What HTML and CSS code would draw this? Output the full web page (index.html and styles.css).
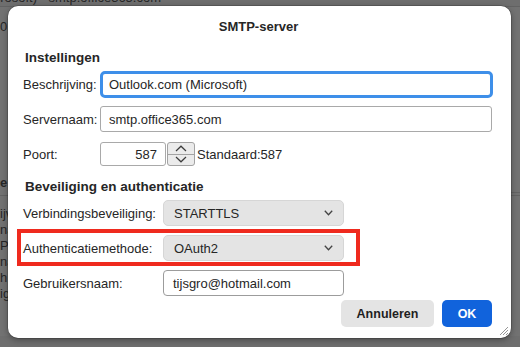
FILE: index.html
```html
<!DOCTYPE html>
<html lang="nl">
<head>
  <meta charset="UTF-8" />
  <title>SMTP-server</title>
  <link rel="stylesheet" href="styles.css">
</head>
<body>
  <!-- window behind the sheet -->
  <div class="behind">
    <div class="behind-title">Outlook.com (Microsoft) - smtp.office365.com</div>
    <div class="behind-list">
      <div class="b-line b-first">0.(</div>
      <div class="b-gap"></div>
      <div class="b-line b-bold">e</div>
      <div class="b-rule"></div>
      <div class="b-line">ijv</div>
      <div class="b-line">na</div>
      <div class="b-line">Po</div>
      <div class="b-line">na</div>
      <div class="b-line">h</div>
      <div class="b-line">ig</div>
    </div>
  </div>
  <div class="behind-right"></div>

  <div class="dialog">
    <div class="title">SMTP-server</div>

    <div class="heading">Instellingen</div>
    <div class="row row-desc">
      <label class="lbl lbl-short">Beschrijving:</label>
      <div class="field focused">Outlook.com (Microsoft)</div>
    </div>
    <div class="row row-server">
      <label class="lbl lbl-short">Servernaam:</label>
      <div class="field">smtp.office365.com</div>
    </div>
    <div class="row row-port">
      <label class="lbl lbl-short">Poort:</label>
      <div class="field number">587</div>
      <div class="stepper">
        <span class="step step-up">
          <svg width="12" height="7" viewBox="0 0 12 7"><path d="M1 6 L6 1.2 L11 6" fill="none" stroke="#3c3c3c" stroke-width="1.2"/></svg>
        </span>
        <span class="step">
          <svg width="12" height="7" viewBox="0 0 12 7"><path d="M1 1 L6 5.8 L11 1" fill="none" stroke="#3c3c3c" stroke-width="1.2"/></svg>
        </span>
      </div>
      <span class="default">Standaard:587</span>
    </div>

    <div class="heading heading-sec">Beveiliging en authenticatie</div>
    <div class="row row-sec">
      <label class="lbl lbl-long">Verbindingsbeveiliging:</label>
      <div class="select">
        <span>STARTTLS</span>
        <svg width="9" height="6" viewBox="0 0 9 6"><path d="M0.8 0.8 L4.5 4.8 L8.2 0.8" fill="none" stroke="#444" stroke-width="1.3"/></svg>
      </div>
    </div>
    <div class="row highlight">
      <label class="lbl lbl-long">Authenticatiemethode:</label>
      <div class="select">
        <span>OAuth2</span>
        <svg width="9" height="6" viewBox="0 0 9 6"><path d="M0.8 0.8 L4.5 4.8 L8.2 0.8" fill="none" stroke="#444" stroke-width="1.3"/></svg>
      </div>
    </div>
    <div class="row row-user">
      <label class="lbl lbl-long">Gebruikersnaam:</label>
      <div class="field user">tijsgro@hotmail.com</div>
    </div>

    <div class="actions">
      <button class="btn">Annuleren</button>
      <button class="btn btn-ok">OK</button>
    </div>

    <svg class="grip" width="12" height="12" viewBox="0 0 12 12">
      <path d="M11 3 L3 11 M11 6 L6 11 M11 9 L9 11" stroke="#8a8a8a" stroke-width="0.9"/>
    </svg>
  </div>
</body>
</html>
```

FILE: styles.css
```css
html, body {
  margin: 0;
  height: 100%;
}
body {
  position: relative;
  overflow: hidden;
  background: #6e6e6e;
  font-family: "Liberation Sans", Arial, sans-serif;
  font-size: 13px;
  color: #262626;
  padding: 6px 0 0 8px;
  box-sizing: border-box;
}

/* ---- window behind ---- */
.behind {
  position: absolute;
  top: -10px;
  left: 0;
  right: 0;
  bottom: 0;
  overflow: hidden;
  color: #262626;
}
.behind-title {
  font-size: 13px;
  line-height: 16px;
  height: 16px;
  white-space: nowrap;
  margin-left: -101px;
}
.behind-list {
  border-top: 1px solid #626262;
  background: #727272;
  padding-top: 12px;
  height: 330px;
  box-sizing: border-box;
}
.b-line {
  font-size: 13px;
  line-height: 16px;
  height: 16px;
  white-space: nowrap;
}
.b-gap { height: 140px; }
.b-bold { font-weight: bold; margin-bottom: 4px; }
.b-rule { border-top: 1px solid #626262; margin-bottom: 10px; }
.behind-right {
  position: absolute;
  top: 192px;
  right: 0;
  width: 12px;
  border-top: 1px solid #636363;
}

/* ---- dialog ---- */
.dialog {
  position: relative;
  width: 503px;
  height: 332px;
  box-sizing: border-box;
  padding: 13px 19px 0 15px;
  background: #fff;
  border-radius: 10px;
  box-shadow: 0 2px 6px rgba(0, 0, 0, 0.35), 0 0 0 0.5px rgba(0, 0, 0, 0.3);
}
.title {
  text-align: center;
  font-weight: bold;
  line-height: 16px;
  padding-left: 2px;
}
.heading {
  font-weight: bold;
  font-size: 13.5px;
  line-height: 16px;
  margin: 15px 0 0 2px;
}
.heading-sec { margin-top: 13px; }

.row {
  display: flex;
  align-items: center;
}
.lbl { flex: none; }
.lbl-short { width: 77px; }
.lbl-long { width: 140px; }

.row-desc { margin-top: 5px; height: 27px; }
.row-server { margin-top: 8px; height: 26px; }
.row-port { margin-top: 10px; height: 24px; }
.row-sec { margin-top: 5px; height: 26px; }
.row-user { margin-top: 4px; height: 26px; }

.field {
  box-sizing: border-box;
  height: 100%;
  flex: 1;
  display: flex;
  align-items: center;
  padding: 0 8px;
  border: 1px solid #a9a9a9;
  border-radius: 3px;
  background: #fff;
}
.field.focused {
  border: 3px solid #3e8fe9;
  border-radius: 5px;
  padding-left: 6px;
  margin-right: -1px;
}
.field.number {
  flex: none;
  width: 66px;
  justify-content: flex-end;
  padding-right: 8px;
}
.field.user {
  flex: none;
  width: 181px;
  padding-left: 9px;
  border-color: #9c9c9c;
  border-radius: 4px;
}
.stepper {
  box-sizing: border-box;
  width: 28px;
  height: 24px;
  margin-left: 1px;
  display: flex;
  flex-direction: column;
  border: 1px solid #a3a3a3;
  border-radius: 3px;
  background: #ebebeb;
}
.step {
  flex: 1;
  display: flex;
  align-items: center;
  justify-content: center;
}
.step-up { border-bottom: 1px solid #a3a3a3; }
.default { margin-left: 2px; }

.select {
  box-sizing: border-box;
  width: 181px;
  height: 26px;
  display: flex;
  align-items: center;
  justify-content: space-between;
  padding: 0 10px 0 10px;
  background: #e4e4e4;
  border: 1px solid #d6d6d6;
  border-radius: 5px;
}

.highlight {
  width: max-content;
  margin: 3px 0 0 -6px;
  padding: 2px 12px 1px 2px;
  border: 4px solid #ef2a1e;
}

.actions {
  margin-top: 4px;
  display: flex;
  justify-content: flex-end;
  gap: 8px;
}
.btn {
  height: 27px;
  border: none;
  border-radius: 5px;
  font-family: "Liberation Sans", Arial, sans-serif;
  font-size: 12.5px;
  font-weight: bold;
  color: #1f1f1f;
  background: #e4e4e4;
  padding: 0;
  width: 93px;
}
.btn-ok {
  width: 50px;
  background: #1163dc;
  color: #fff;
}
.grip {
  position: absolute;
  right: 2px;
  bottom: 2px;
}
```
